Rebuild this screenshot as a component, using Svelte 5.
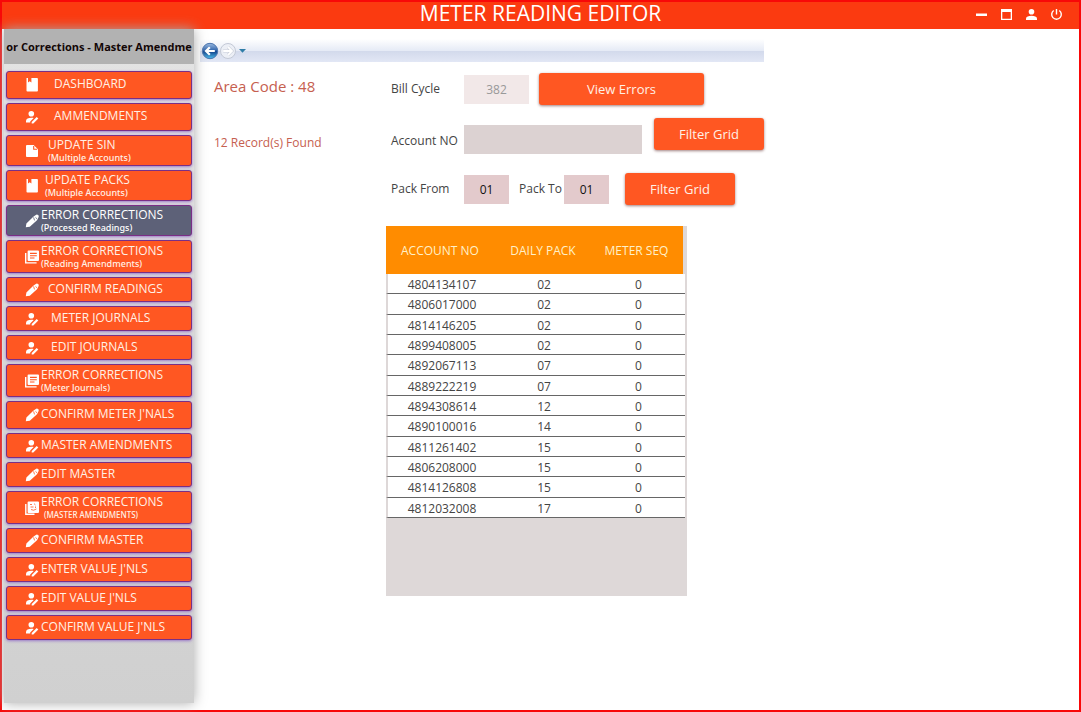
<script>
  const menu = [
    { title: 'DASHBOARD', icon: 'book', size: 'mid', gap: 'g5' },
    { title: 'AMMENDMENTS', icon: 'userEdit', size: 'mid', gap: 'g5' },
    { title: 'UPDATE SIN', sub: '(Multiple Accounts)', icon: 'file', size: 'two', gap: 'g3' },
    { title: 'UPDATE PACKS', sub: '(Multiple Accounts)', icon: 'book', size: 'two', gap: 'g2' },
    { title: 'ERROR CORRECTIONS', sub: '(Processed Readings)', icon: 'pencil', size: 'two', gap: 'g1', active: true },
    { title: 'ERROR CORRECTIONS', sub: '(Reading Amendments)', icon: 'library', size: 'tall', gap: 'g1' },
    { title: 'CONFIRM READINGS', icon: 'pencil', size: 'low', gap: 'g3' },
    { title: 'METER JOURNALS', icon: 'userEdit', size: 'low', gap: 'g4' },
    { title: 'EDIT JOURNALS', icon: 'userEdit', size: 'low', gap: 'g4' },
    { title: 'ERROR CORRECTIONS', sub: '(Meter Journals)', icon: 'library', size: 'tall', gap: 'g1' },
    { title: "CONFIRM METER J'NALS", icon: 'pencil', size: 'mid', gap: 'g1' },
    { title: 'MASTER AMENDMENTS', icon: 'userEdit', size: 'low', gap: 'g1' },
    { title: 'EDIT MASTER', icon: 'pencil', size: 'low', gap: 'g1' },
    { title: 'ERROR CORRECTIONS', sub: '(MASTER AMENDMENTS)', small: true, icon: 'stack', size: 'tall', gap: 'g1' },
    { title: 'CONFIRM MASTER', icon: 'pencil', size: 'low', gap: 'g1' },
    { title: "ENTER VALUE J'NLS", icon: 'userEdit', size: 'low', gap: 'g1' },
    { title: "EDIT VALUE J'NLS", icon: 'userEdit', size: 'low', gap: 'g1' },
    { title: "CONFIRM VALUE J'NLS", icon: 'userEdit', size: 'low', gap: 'g1' }
  ];

  const rows = [
    ['4804134107', '02', '0'],
    ['4806017000', '02', '0'],
    ['4814146205', '02', '0'],
    ['4899408005', '02', '0'],
    ['4892067113', '07', '0'],
    ['4889222219', '07', '0'],
    ['4894308614', '12', '0'],
    ['4890100016', '14', '0'],
    ['4811261402', '15', '0'],
    ['4806208000', '15', '0'],
    ['4814126808', '15', '0'],
    ['4812032008', '17', '0']
  ];
</script>

{#snippet glyph(name)}
  <svg class="glyph" viewBox="0 0 14 14" aria-hidden="true">
    {#if name === 'book'}
      <path d="M1.5 0H3V4.5L4.7 3.3 6.4 4.5V0H12A.9.9 0 0 1 12.9 1V12.5A.9.9 0 0 1 12 13.5H2.4A.9.9 0 0 1 1.5 12.5Z" />
    {:else if name === 'file'}
      <path d="M2 1H8.6L13 5.3V11.9A1 1 0 0 1 12 13H2A1 1 0 0 1 1 11.9V2A1 1 0 0 1 2 1Z" />
      <path class="cut" d="M8.7 1.9V5.3H12.2" />
    {:else if name === 'pencil'}
      <path d="M.8 13.3 1.4 9.6 8.3 2.8 10.8 1A1.8 1.8 0 0 1 13.4 3.4L12 6.2 4.8 12.8Z" />
      <path class="cut thin" d="M8.6 3.4 9.5 6.4M10.5 3.4 12 4.8" />
    {:else if name === 'library'}
      <path d="M3.5.5H13A1 1 0 0 1 14 1.5V10A1 1 0 0 1 13 11H3.5A1 1 0 0 1 2.6 10V1.5A1 1 0 0 1 3.5.5Z" />
      <path class="line" d="M.7 3V12.9H11.6" />
      <path class="cut" d="M5 3.4H11.8M5 5.7H11.8M5 8H9.5" />
    {:else if name === 'stack'}
      <path d="M3.5.5H13A1 1 0 0 1 14 1.5V11A1 1 0 0 1 13 12H3.5A1 1 0 0 1 2.6 11V1.5A1 1 0 0 1 3.5.5Z" />
      <path class="line" d="M.8 3V13.3H9.5" />
      <path class="cut thin" d="M5 3.5H7M9 2.6 10.5 4M5.5 6H8.5M10.5 5.5V7M6 8.5Q8.5 10.2 11.4 8" />
    {:else}
      <circle cx="6.3" cy="3.8" r="2.8" />
      <path d="M1 12.5V11C1 8.9 3.5 7.8 6.3 7.8 7.3 7.8 8 7.9 8.7 8.1L5.2 11.6V12.5Z" />
      <path d="M6.7 13.5V12L11.7 7.1 13.3 8.6 8.3 13.5Z" />
    {/if}
  </svg>
{/snippet}

<div class="window">
  <header>
    <h1>METER READING EDITOR</h1>
    <div class="controls">
      <button aria-label="Minimize"><svg viewBox="0 0 13 13"><path d="M1 4.5H12V7H1Z" /></svg></button>
      <button aria-label="Maximize"><svg viewBox="0 0 13 13"><path fill-rule="evenodd" d="M1 0H12V11H1ZM2.3 3V9.7H10.7V3Z" /></svg></button>
      <button aria-label="Account"><svg viewBox="0 0 13 13"><circle cx="6.5" cy="2.8" r="2.8" /><path d="M1 11V9.4C1 7.6 3.6 6.7 6.5 6.7S12 7.6 12 9.4V11Z" /></svg></button>
      <button aria-label="Power"><svg class="stroked" viewBox="0 0 13 13"><path d="M6.5 0V5.5M3.7 1.5A4.8 4.8 0 1 0 9.3 1.5" /></svg></button>
    </div>
  </header>

  <div class="body">
    <aside>
      <div class="ticker">or Corrections - Master Amendme</div>
      <nav>
        {#each menu as item}
          <button class="item {item.size} {item.gap}" class:active={item.active}>
            {@render glyph(item.icon)}
            <span class="label" class:double={item.sub}>
              <span class="title">{item.title}</span>
              {#if item.sub}<span class="sub" class:small={item.small}>{item.sub}</span>{/if}
            </span>
          </button>
        {/each}
      </nav>
    </aside>

    <main>
      <div class="navbar">
        <button aria-label="Back">
          <svg viewBox="0 0 18 18">
            <defs>
              <linearGradient id="orb" x1="0" y1="0" x2="0" y2="1">
                <stop offset="0" stop-color="#9cbbe2" />
                <stop offset=".45" stop-color="#3467ad" />
                <stop offset=".55" stop-color="#13478f" />
                <stop offset="1" stop-color="#4fc0ee" />
              </linearGradient>
            </defs>
            <circle cx="9" cy="9" r="7.7" fill="url(#orb)" stroke="#4a74ae" />
            <path d="M13.8 9H5.2M8.8 5.2 5 9 8.8 12.8" fill="none" stroke="#fff" stroke-width="2.2" />
          </svg>
        </button>
        <button aria-label="Forward">
          <svg viewBox="0 0 18 18">
            <circle cx="9" cy="9" r="7.5" fill="#eceff6" stroke="#c3c9d6" />
            <path d="M4.2 9H12.8M9.2 5.2 13 9 9.2 12.8" fill="none" stroke="#c9ced9" stroke-width="3" />
            <path d="M4.2 9H12.8M9.2 5.2 13 9 9.2 12.8" fill="none" stroke="#fff" stroke-width="1.8" />
          </svg>
        </button>
        <button class="history" aria-label="History"><svg viewBox="0 0 7 4"><path d="M0 0H7L3.5 3.7Z" fill="#2f7da8" /></svg></button>
      </div>

      <div class="page">
        <section class="info">
          <h2>Area Code : 48</h2>
          <p>12 Record(s) Found</p>
        </section>

        <section class="work">
          <form onsubmit={(e) => e.preventDefault()}>
            <div class="row">
              <label class="lead" for="cycle">Bill Cycle</label>
              <input id="cycle" class="cycle" value="382" disabled />
              <button class="action wide">View Errors</button>
            </div>
            <div class="row account-row">
              <label class="lead" for="account">Account NO</label>
              <input id="account" class="account" />
              <button class="action">Filter Grid</button>
            </div>
            <div class="row pack-row">
              <label class="lead" for="from">Pack From</label>
              <input id="from" class="pack" value="01" />
              <label class="to" for="to">Pack To</label>
              <input id="to" class="pack" value="01" />
              <button class="action">Filter Grid</button>
            </div>
          </form>

          <div class="grid">
            <table>
              <colgroup><col class="c1" /><col class="c2" /><col class="c3" /></colgroup>
              <thead>
                <tr><th>ACCOUNT NO</th><th>DAILY PACK</th><th>METER SEQ</th></tr>
              </thead>
              <tbody>
                {#each rows as row}
                  <tr>{#each row as cell}<td>{cell}</td>{/each}</tr>
                {/each}
              </tbody>
            </table>
          </div>
        </section>
      </div>
    </main>
  </div>
</div>

<style>
  :global(body) {
    margin: 0;
    background: #fff;
  }
  * {
    box-sizing: border-box;
  }
  .window {
    display: flex;
    flex-direction: column;
    min-height: 100vh;
    border: 2px solid #f80808;
    background: #fff;
    color: #444;
    font: 12px/16px 'Open Sans', 'Noto Sans', sans-serif;
  }
  button,
  input {
    margin: 0;
    padding: 0;
    border: 0;
    font: inherit;
  }
  button {
    cursor: pointer;
  }
  header {
    display: grid;
    grid-template-columns: 1fr auto 1fr;
    align-items: center;
    height: 27px;
    background: #fb3a10;
    color: #fff;
  }
  h1 {
    grid-column: 2;
    align-self: start;
    margin: 0;
    font-size: 21px;
    line-height: 22px;
    font-weight: 400;
  }
  .controls {
    display: flex;
    justify-content: flex-end;
    gap: 12px;
    padding-right: 16px;
  }
  .controls button {
    display: flex;
    width: 13px;
    height: 13px;
    background: none;
  }
  .controls svg {
    width: 13px;
    height: 13px;
    fill: #fff;
    overflow: visible;
  }
  .controls .stroked {
    fill: none;
    stroke: #fff;
    stroke-width: 1.4;
  }
  .body {
    display: flex;
    flex: 1;
  }
  aside {
    position: relative;
    flex: none;
    width: 190px;
    margin: 0 0 7px 2px;
    background: linear-gradient(#e4e4e4, #dadada 40%, #d0d0d0);
    box-shadow: 0 0 12px #aaa;
  }
  .ticker {
    display: flex;
    justify-content: center;
    align-items: center;
    height: 35px;
    background: #b2b2b2;
    color: #120606;
    font-size: 11px;
    font-weight: 700;
    white-space: nowrap;
  }
  nav {
    display: flex;
    flex-direction: column;
    gap: 4px;
    padding: 7px 2px;
  }
  .item {
    display: flex;
    align-items: center;
    padding: 0 0 0 18px;
    border: 1px solid #7a2f86;
    border-radius: 3px;
    background: #ff5722;
    box-shadow: 0 1px 3px #9a78c8;
    color: #fff1e6;
    text-align: left;
    white-space: nowrap;
  }
  .item.active {
    background: #5d6178;
    color: #fff;
  }
  .low { height: 25px; }
  .mid { height: 28px; }
  .two { height: 31px; }
  .tall { height: 33px; }
  .g1 { gap: 2px; }
  .g2 { gap: 6px; }
  .g3 { gap: 9px; }
  .g4 { gap: 12px; }
  .g5 { gap: 15px; }
  .glyph {
    flex: none;
    width: 14px;
    height: 14px;
    fill: #fff;
  }
  .glyph .cut {
    fill: none;
    stroke: #ff5722;
    stroke-width: 1.1;
  }
  .glyph .thin {
    stroke-width: 0.8;
  }
  .active .glyph .cut {
    stroke: #5d6178;
  }
  .glyph .line {
    fill: none;
    stroke: #fff;
    stroke-width: 1.4;
  }
  .label {
    display: flex;
    flex-direction: column;
    padding-bottom: 2px;
  }
  .label.double {
    padding-bottom: 0;
  }
  .title {
    line-height: 14px;
  }
  .sub {
    font-family: 'Noto Sans', sans-serif;
    font-size: 9px;
    line-height: 12px;
    font-weight: 500;
  }
  .sub.small {
    padding-left: 3px;
    font-size: 8px;
  }
  main {
    flex: 1;
    min-width: 0;
    max-width: 570px;
    padding: 10px 0 0 6px;
  }
  .navbar {
    display: flex;
    align-items: center;
    height: 23px;
    padding: 0 1px;
    background: linear-gradient(#fff, #e6ebf6 50%, #d3daec 54%, #e2e7f5);
  }
  .navbar button {
    display: flex;
    background: none;
  }
  .navbar svg {
    width: 18px;
    height: 18px;
  }
  .navbar .history {
    margin-left: 2px;
  }
  .navbar .history svg {
    width: 7px;
    height: 4px;
  }
  .page {
    display: flex;
    padding-top: 11px;
  }
  .info {
    flex: none;
    width: 186px;
    padding: 3px 0 0 14px;
    color: #c6604f;
  }
  h2 {
    margin: 0;
    font-size: 15px;
    line-height: 20px;
    font-weight: 400;
  }
  p {
    margin: 39px 0 0;
  }
  form {
    padding-left: 5px;
  }
  .row {
    display: flex;
    align-items: center;
    height: 32px;
  }
  .lead {
    flex: none;
    width: 73px;
  }
  input {
    height: 29px;
    border-radius: 0;
    text-align: center;
  }
  .cycle {
    width: 65px;
    margin-right: 10px;
    background: #f2e8e8;
    color: #999;
  }
  .account {
    width: 178px;
    margin-right: 12px;
    background: #dcd2d2;
  }
  .pack {
    width: 45px;
    background: #e3cacc;
    color: #111;
  }
  .action {
    width: 110px;
    height: 32px;
    border-radius: 3px;
    background: #ff5722;
    box-shadow: 0 1px 3px #a08080;
    color: #fff1e6;
    font-size: 13px;
  }
  .wide {
    width: 165px;
  }
  .account-row {
    height: 36px;
    margin-top: 13px;
    align-items: flex-end;
  }
  .account-row .lead {
    line-height: 26px;
  }
  .account-row .action {
    align-self: flex-start;
  }
  .pack-row {
    margin-top: 19px;
  }
  .to {
    width: 55px;
    padding-left: 10px;
  }
  .pack-row .action {
    margin-left: 16px;
  }
  .grid {
    width: 301px;
    height: 370px;
    margin-top: 21px;
    background: #ded8d8;
  }
  table {
    width: 299px;
    height: 292px;
    table-layout: fixed;
    border-spacing: 0;
  }
  .c1 { width: 110px; }
  .c2 { width: 96px; }
  .c3 { width: 93px; }
  th {
    height: 48px;
    padding: 2px 2px 0 0;
    background: #ff8c00;
    color: #fff0c8;
    font-weight: 400;
  }
  th:last-child {
    border-right: 2px solid #ded8d8;
  }
  td {
    padding: 3px 0 0;
    border-bottom: 1px solid #666;
    background: #fff;
    text-align: center;
  }
  td:first-child {
    border-left: 2px solid #ded8d8;
  }
</style>
